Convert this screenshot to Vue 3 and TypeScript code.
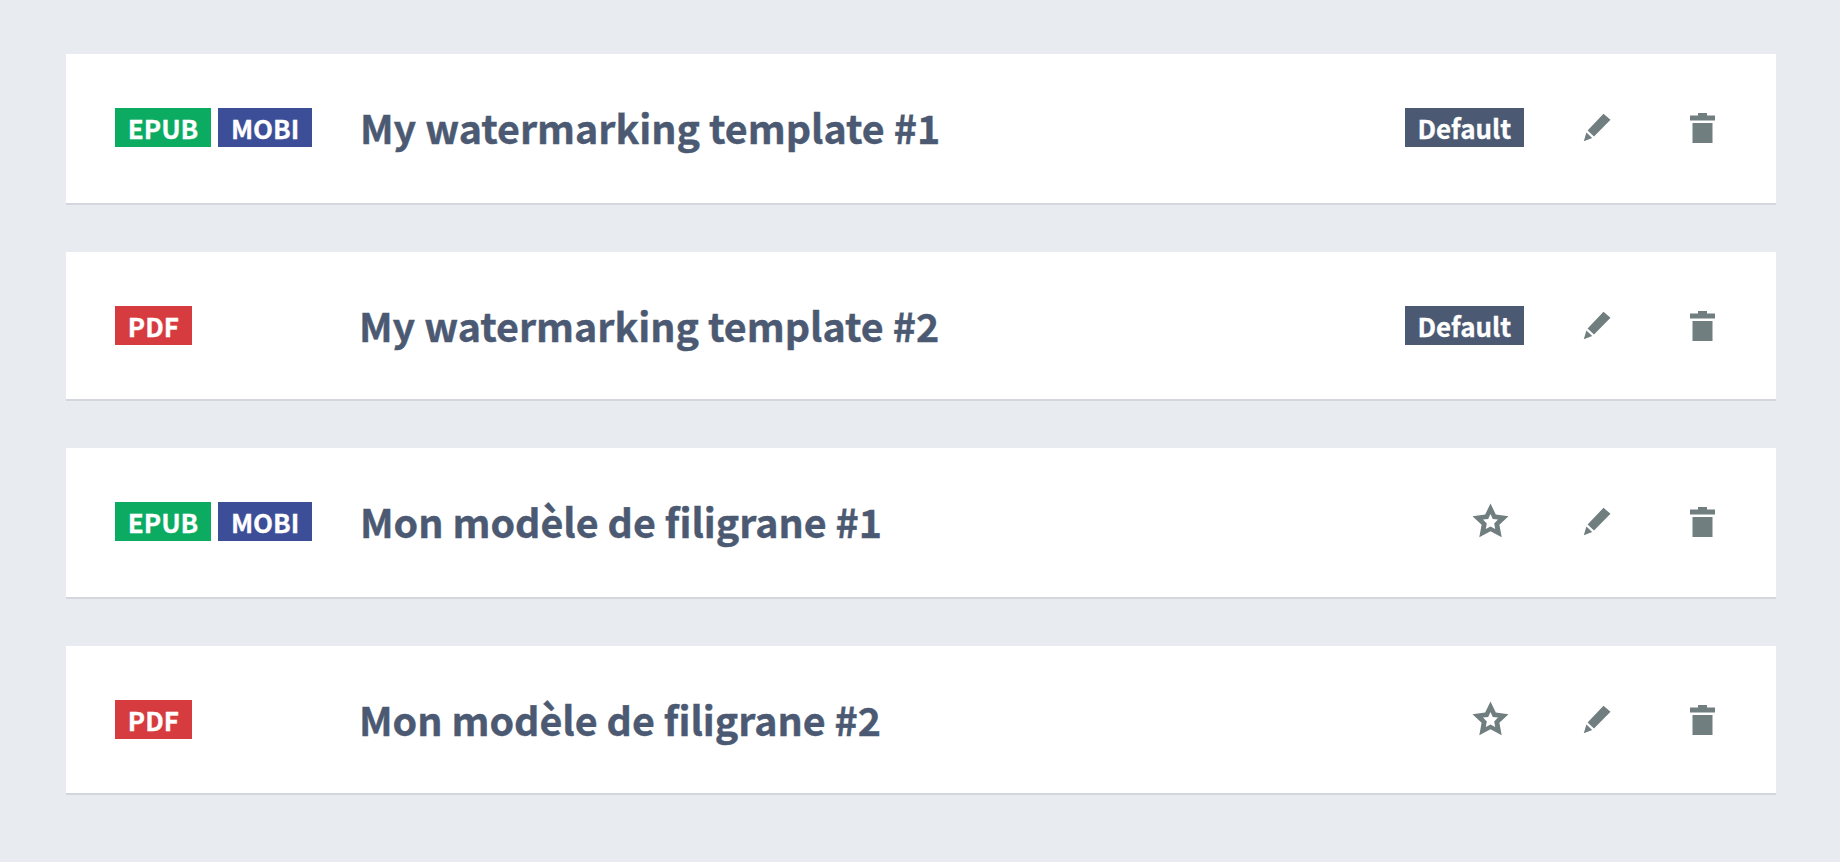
<template>
  <main class="template-list">
    <article
      v-for="item in templates"
      :key="item.name"
      class="template-card"
      :class="{ single: item.formats.length === 1 }"
    >
      <div class="formats">
        <span v-for="format in item.formats" :key="format" class="tag" :class="format.toLowerCase()">{{ format }}</span>
      </div>
      <h2 class="name">{{ item.name }}</h2>
      <div class="actions">
        <div class="favourite">
          <span v-if="item.isDefault" class="tag default">Default</span>
          <button v-else class="icon star" aria-label="Set as default">
            <svg width="37" height="35" viewBox="0 0 37 35">
              <path
                fill-rule="evenodd"
                d="M18.5 0.5 23.8 11.5 36.5 13.2 27.4 21.8 29.7 34.3 18.5 28.3 7.3 34.3 9.6 21.8 0.5 13.2 13.2 11.5Z M18.5 11 16.2 16 11 16.6 14.8 20.6 13.8 26 18.5 23.4 23.2 26 22.2 20.6 26 16.6 20.8 16Z"
                fill="#707e80"
              />
            </svg>
          </button>
        </div>
        <button class="icon" aria-label="Edit">
          <svg width="28" height="29" viewBox="0 0 28 29">
            <path d="M20.5 0.8 27.5 6.8 11 23.6 4.6 17.6Z M3.4 19.6 9.2 24.9 0.8 28.2Z" fill="#707e80" />
          </svg>
        </button>
        <button class="icon" aria-label="Delete">
          <svg width="25" height="30" viewBox="0 0 25 30">
            <path d="M8 0H17V2.5H25V7.5H0V2.5H8Z M2.5 10H22.5V30H2.5Z" fill="#707e80" />
          </svg>
        </button>
      </div>
    </article>
  </main>
</template>

<script setup lang="ts">
interface WatermarkTemplate {
  name: string
  formats: string[]
  isDefault: boolean
}

const templates: WatermarkTemplate[] = [
  { name: 'My watermarking template #1', formats: ['EPUB', 'MOBI'], isDefault: true },
  { name: 'My watermarking template #2', formats: ['PDF'], isDefault: true },
  { name: 'Mon modèle de filigrane #1', formats: ['EPUB', 'MOBI'], isDefault: false },
  { name: 'Mon modèle de filigrane #2', formats: ['PDF'], isDefault: false }
]
</script>

<style scoped>
.template-list {
  display: flex;
  flex-direction: column;
  gap: 49px;
  padding: 54px 64px 0 66px;
}

.template-card {
  display: flex;
  align-items: center;
  height: 149px;
  padding: 54px 42px 56px 49px;
  box-sizing: border-box;
  background: #fff;
  box-shadow: 0 2px 0 #d3d6dc;
}

.template-card.single {
  height: 147px;
  padding-bottom: 54px;
}

.formats {
  display: flex;
  gap: 7px;
  width: 245px;
  flex-shrink: 0;
}

.single .formats {
  width: 244px;
}

.tag {
  display: block;
  height: 39px;
  padding: 0 12.8px;
  font-size: 26px;
  font-weight: 700;
  line-height: 39px;
  color: #fff;
  -webkit-text-stroke: 0.3px currentColor;
}

.epub {
  background: #0bab62;
}

.mobi {
  background: #3c4e98;
}

.pdf {
  background: #d63c3f;
}

.default {
  background: #4b5a72;
}

.name {
  flex: 1;
  margin: 0;
  padding-bottom: 2px;
  font-size: 39.4px;
  font-weight: 700;
  line-height: 37px;
  font-variant-ligatures: none;
  color: #4b5a72;
  -webkit-text-stroke: 0.4px currentColor;
}

.actions {
  display: flex;
  align-items: center;
  gap: 41px;
}

.favourite {
  display: flex;
  justify-content: flex-end;
}

.icon {
  display: flex;
  align-items: center;
  justify-content: center;
  width: 64px;
  height: 39px;
  padding: 0;
  border: 0;
  background: none;
}

.star {
  width: 68px;
  padding-bottom: 3px;
}
</style>

<style>
html,
body {
  background: #e8ecf1;
  font-family: "Noto Sans CJK SC", "Noto Sans", sans-serif;
}

body {
  min-height: 862px;
}
</style>
